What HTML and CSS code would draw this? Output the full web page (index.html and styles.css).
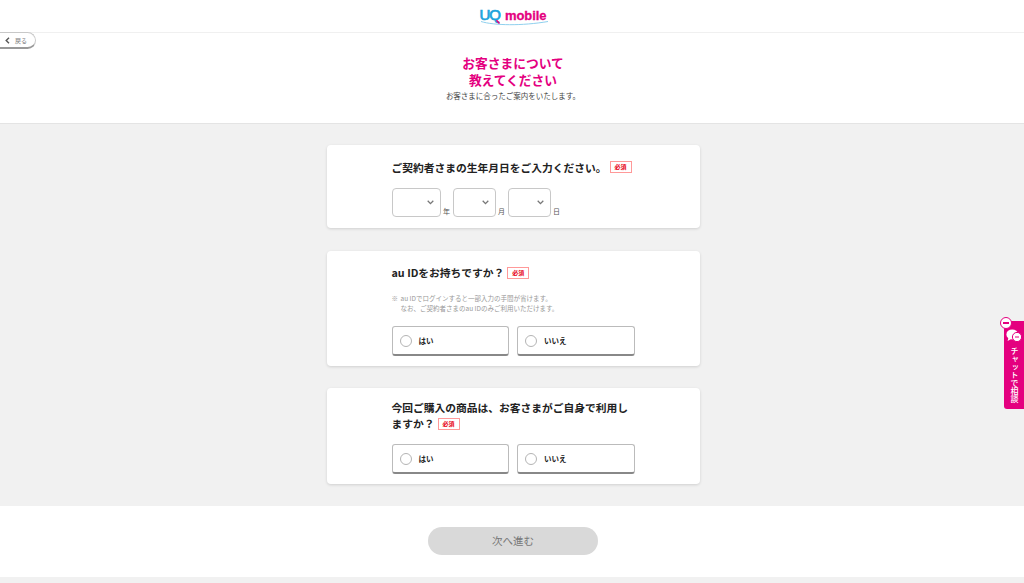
FILE: index.html
```html
<!DOCTYPE html>
<html lang="ja">
<head>
<meta charset="utf-8">
<title>お客さまについて教えてください</title>
<link rel="stylesheet" href="styles.css">
</head>
<body>
<header class="top">
  <div class="logo">
    <span class="logo-uq">UQ</span><span class="logo-mobile">mobile</span>
    <svg class="logo-swoosh" width="70" height="8" viewBox="0 0 70 8"><path d="M1 1.5C14 5.5 42 6 68 1.5" fill="none" stroke="#8fd0ee" stroke-width="1"/><path d="M16.5 .2 19.5 3.6" fill="none" stroke="#e4007f" stroke-width="1.5"/></svg>
  </div>
</header>
<a class="back"><svg width="5" height="7" viewBox="0 0 5 7"><path d="M4 .8 1.2 3.5 4 6.2" fill="none" stroke="#555" stroke-width="1.4"/></svg><span>戻る</span></a>
<section class="intro">
  <h1>お客さまについて<br>教えてください</h1>
  <p>お客さまに合ったご案内をいたします。</p>
</section>
<main class="form-area">
  <div class="card card-birth">
    <h2>ご契約者さまの生年月日をご入力ください。<span class="req req-birth">必須</span></h2>
    <div class="dates">
      <div class="sel sel-y"><svg width="7" height="5" viewBox="0 0 7 5"><path d="M.7 .8 3.5 3.6 6.3 .8" fill="none" stroke="#777" stroke-width="1.3"/></svg></div><span class="unit">年</span>
      <div class="sel"><svg width="7" height="5" viewBox="0 0 7 5"><path d="M.7 .8 3.5 3.6 6.3 .8" fill="none" stroke="#777" stroke-width="1.3"/></svg></div><span class="unit">月</span>
      <div class="sel"><svg width="7" height="5" viewBox="0 0 7 5"><path d="M.7 .8 3.5 3.6 6.3 .8" fill="none" stroke="#777" stroke-width="1.3"/></svg></div><span class="unit">日</span>
    </div>
  </div>
  <div class="card card-au">
    <h2>au IDをお持ちですか？<span class="req">必須</span></h2>
    <div class="note">
      <span class="mark">※</span>
      <p>au IDでログインすると一部入力の手間が省けます。<br>なお、ご契約者さまのau IDのみご利用いただけます。</p>
    </div>
    <div class="choices">
      <div class="choice"><i class="radio"></i><b>はい</b></div>
      <div class="choice"><i class="radio"></i><b>いいえ</b></div>
    </div>
  </div>
  <div class="card card-buy">
    <h2>今回ご購入の商品は、お客さまがご自身で利用しますか？<span class="req">必須</span></h2>
    <div class="choices">
      <div class="choice"><i class="radio"></i><b>はい</b></div>
      <div class="choice"><i class="radio"></i><b>いいえ</b></div>
    </div>
  </div>
</main>
<section class="actions"><div class="next">次へ進む</div></section>
<div class="foot"></div>
<aside class="chat">
  <span class="chat-close"></span>
  <svg class="chat-icon" width="16" height="13" viewBox="0 0 16 13"><ellipse cx="6.2" cy="5.4" rx="5.8" ry="5" fill="#fff"/><path d="M2.5 8.5 1.6 12 6 9.5Z" fill="#fff"/><circle cx="11" cy="8" r="4.6" fill="#fff" stroke="#e4007f"/><path d="M9 8h4" stroke="#e4007f" stroke-width="1"/></svg>
  <span class="chat-text">チャットで相談</span>
</aside>
</body>
</html>
```
FILE: styles.css
```css
* { box-sizing: border-box; }
html, body { margin: 0; padding: 0; }
body {
  width: 1024px;
  height: 583px;
  overflow: hidden;
  position: relative;
  background: #f1f1f1;
  color: #222;
  font-family: "Noto Sans CJK JP", "Noto Sans", sans-serif;
}
.top {
  height: 33px;
  background: #fff;
  border-bottom: 1px solid #f0f0f0;
  display: flex;
  justify-content: center;
}
.logo {
  position: relative;
  width: 68px;
  height: 26px;
  margin-top: 5px;
  margin-left: 3px;
  display: flex;
  align-items: baseline;
  font-family: "Liberation Sans", sans-serif;
  font-weight: 700;
  line-height: 20px;
}
.logo-uq { color: #1ba3dc; font-size: 15px; letter-spacing: -1px; font-weight: 400; -webkit-text-stroke: .7px #1ba3dc; }
.logo-mobile { color: #e4007f; font-size: 13px; margin-left: 5px; letter-spacing: -.1px; -webkit-text-stroke: .3px #e4007f; }
.logo-swoosh { position: absolute; left: 0; top: 15px; }
.back {
  position: absolute;
  left: -8px;
  top: 32px;
  width: 44px;
  height: 17px;
  padding-left: 12px;
  display: flex;
  align-items: center;
  gap: 5px;
  background: #fff;
  border: 1px solid #c8c8c8;
  border-bottom: 2px solid #999;
  border-radius: 0 9px 9px 0;
  font-size: 6px;
  color: #777;
}
.intro {
  height: 90px;
  background: #fff;
  text-align: center;
  padding: 21px 0 0 2px;
}
.intro h1 {
  margin: 0;
  font-size: 12.75px;
  line-height: 17px;
  font-weight: 700;
  color: #e4007f;
}
.intro p {
  margin: 2px 0 0;
  font-size: 7.5px;
  line-height: 11px;
  color: #444;
}
.form-area {
  height: 383px;
  border-top: 1px solid #e4e4e4;
  padding: 21px 0 0 2px;
  display: flex;
  flex-direction: column;
  align-items: center;
}
.card {
  width: 373px;
  background: #fff;
  border-radius: 4px;
  box-shadow: 0 1px 3px rgba(0, 0, 0, .14);
  padding-left: 65px;
  padding-right: 65px;
}
.card-birth { height: 83px; padding-top: 15px; }
.card-au { height: 115px; margin-top: 23px; padding-top: 14px; }
.card-buy { height: 96px; margin-top: 22px; padding-top: 12px; }
h2 {
  margin: 0;
  font-size: 10.75px;
  line-height: 15px;
  font-weight: 700;
  color: #222;
}
.card-birth h2 { white-space: nowrap; }
.card-buy h2 { line-height: 16px; }
.req {
  display: inline-block;
  margin: -6px 0 -2px 3px;
  width: 22px;
  height: 12px;
  border: 1px solid #f99;
  color: #e60012;
  font-size: 6px;
  line-height: 10px;
  text-align: center;
  vertical-align: 2px;
  font-weight: 700;
}
.req-birth { vertical-align: 3px; }
.dates {
  margin-top: 13px;
  display: flex;
  align-items: flex-end;
}
.sel {
  position: relative;
  width: 43px;
  height: 29px;
  background: #fff;
  border: 1px solid #c8c8c8;
  border-radius: 4px;
}
.sel-y { width: 49px; }
.sel svg { position: absolute; right: 6px; top: 11px; }
.unit {
  width: 12px;
  text-align: center;
  font-size: 7px;
  line-height: 9px;
  color: #555;
  padding-bottom: 1px;
}
.note {
  margin-top: 13px;
  display: flex;
  font-size: 6.5px;
  line-height: 10px;
  color: #999;
}
.mark { width: 9px; flex: none; }
.note p { margin: 0; white-space: nowrap; }
.choices {
  display: flex;
  gap: 8px;
}
.card-au .choices { margin-top: 13px; }
.card-buy .choices { margin-top: 12px; }
.choice {
  width: 118px;
  height: 30px;
  display: flex;
  align-items: center;
  padding-left: 7px;
  background: #fff;
  border: 1px solid #bbb;
  border-bottom: 2px solid #888;
  border-radius: 3px;
}
.radio {
  width: 12px;
  height: 12px;
  border: 1px solid #b4b4b4;
  border-radius: 50%;
  margin-right: 7px;
}
.choice b {
  font-size: 7.5px;
  font-weight: 700;
  color: #222;
}
.actions {
  height: 71px;
  background: #fff;
  padding: 21px 0 0 2px;
  display: flex;
  justify-content: center;
}
.next {
  width: 170px;
  height: 28px;
  border-radius: 14px;
  background: #d9d9d9;
  color: #777;
  font-size: 10.5px;
  line-height: 28px;
  text-align: center;
}
.foot { height: 6px; }
.chat {
  position: absolute;
  left: 1004px;
  top: 321px;
  width: 20px;
  height: 88px;
  background: #e4007f;
  border-radius: 3px 0 0 3px;
  display: flex;
  flex-direction: column;
  align-items: center;
}
.chat-close {
  position: absolute;
  left: -4px;
  top: -4px;
  width: 12px;
  height: 12px;
  border-radius: 50%;
  background: #fff;
  border: 1px solid #e4007f;
}
.chat-close::after {
  content: "";
  position: absolute;
  left: 2px;
  top: 4px;
  width: 6px;
  height: 1.5px;
  background: #e4007f;
}
.chat-icon { margin-top: 8px; }
.chat-text {
  margin-top: 5px;
  writing-mode: vertical-rl;
  color: #fff;
  font-size: 8px;
  line-height: 20px;
  font-weight: 500;
}
```
